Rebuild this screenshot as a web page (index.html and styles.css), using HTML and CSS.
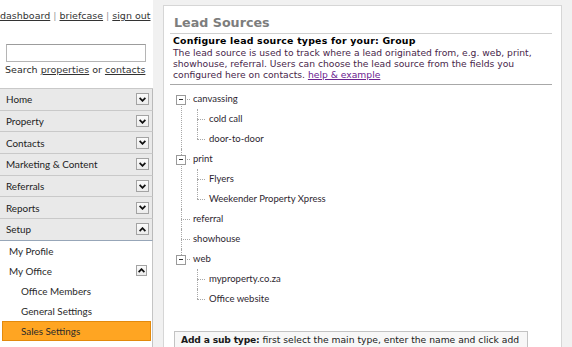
FILE: index.html
```html
<!DOCTYPE html>
<html lang="en">
<head>
    <meta charset="UTF-8">
    <title>Lead Sources</title>
    <link rel="stylesheet" href="styles.css">
</head>
<body>
    <div class="page">
        <aside class="sidebar">
            <div class="top-links">
                <a href="#">dashboard</a><span class="sep">|</span><a href="#">briefcase</a><span class="sep">|</span><a href="#">sign out</a>
            </div>

            <div class="search">
                <input class="search-input" type="text">
                <div class="search-hint">Search <a href="#">properties</a> or <a href="#">contacts</a></div>
            </div>

            <ul class="menu">
                <li class="menu-item"><span>Home</span><span class="chev"><svg width="7" height="5" viewBox="0 0 7 5"><path d="M0.6 0.8 L3.5 3.8 L6.4 0.8" /></svg></span></li>
                <li class="menu-item"><span>Property</span><span class="chev"><svg width="7" height="5" viewBox="0 0 7 5"><path d="M0.6 0.8 L3.5 3.8 L6.4 0.8" /></svg></span></li>
                <li class="menu-item"><span>Contacts</span><span class="chev"><svg width="7" height="5" viewBox="0 0 7 5"><path d="M0.6 0.8 L3.5 3.8 L6.4 0.8" /></svg></span></li>
                <li class="menu-item"><span>Marketing &amp; Content</span><span class="chev"><svg width="7" height="5" viewBox="0 0 7 5"><path d="M0.6 0.8 L3.5 3.8 L6.4 0.8" /></svg></span></li>
                <li class="menu-item"><span>Referrals</span><span class="chev"><svg width="7" height="5" viewBox="0 0 7 5"><path d="M0.6 0.8 L3.5 3.8 L6.4 0.8" /></svg></span></li>
                <li class="menu-item"><span>Reports</span><span class="chev"><svg width="7" height="5" viewBox="0 0 7 5"><path d="M0.6 0.8 L3.5 3.8 L6.4 0.8" /></svg></span></li>
                <li class="menu-item open"><span>Setup</span><span class="chev"><svg width="7" height="5" viewBox="0 0 7 5"><path d="M0.6 4.2 L3.5 1.2 L6.4 4.2" /></svg></span></li>
            </ul>

            <ul class="submenu">
                <li class="sub-item">My Profile</li>
                <li class="sub-item">My Office<span class="chev small"><svg width="7" height="5" viewBox="0 0 7 5"><path d="M0.6 4.2 L3.5 1.2 L6.4 4.2" /></svg></span></li>
                <li class="sub-item level2">Office Members</li>
                <li class="sub-item level2">General Settings</li>
                <li class="sub-item level2 active">Sales Settings</li>
            </ul>
        </aside>

        <main class="panel">
            <div class="panel-head">
                <h1 class="panel-title">Lead Sources</h1>
                <div class="intro">
                    <h2 class="intro-title">Configure lead source types for your: Group</h2>
                    <p class="intro-text">The lead source is used to track where a lead originated from, e.g. web, print, showhouse, referral. Users can choose the lead source from the fields you configured here on contacts. <a href="#">help &amp; example</a></p>
                </div>
            </div>

            <ul class="tree">
                <li>
                    <span class="toggle"></span><span class="label">canvassing</span>
                    <ul>
                        <li><span class="label">cold call</span></li>
                        <li><span class="label">door-to-door</span></li>
                    </ul>
                </li>
                <li>
                    <span class="toggle"></span><span class="label">print</span>
                    <ul>
                        <li><span class="label">Flyers</span></li>
                        <li><span class="label">Weekender Property Xpress</span></li>
                    </ul>
                </li>
                <li><span class="label">referral</span></li>
                <li><span class="label">showhouse</span></li>
                <li>
                    <span class="toggle"></span><span class="label">web</span>
                    <ul>
                        <li><span class="label">myproperty.co.za</span></li>
                        <li><span class="label">Office website</span></li>
                    </ul>
                </li>
            </ul>

            <div class="hint-box">
                <b>Add a sub type:</b> first select the main type, enter the name and click add a new sub type to add it underneath the selected main type.
            </div>
        </main>
    </div>
</body>
</html>
```

FILE: styles.css
```css
:root {
    --verdana: "DejaVu Sans", Verdana, sans-serif;
    --segoe: Lato, "Segoe UI", sans-serif;
    --page-bg: #f1f1f1;
    --row-bg: #e9e9e9;
    --row-line: #c9c9c9;
    --text: #2b2b2b;
}

* {
    margin: 0;
    padding: 0;
    box-sizing: border-box;
}

body {
    background: var(--page-bg);
    height: 347px;
    overflow: hidden;
    font-family: var(--verdana);
    color: var(--text);
}

.page {
    display: flex;
    align-items: flex-start;
    height: 100%;
}

/* ---------- sidebar ---------- */

.sidebar {
    width: 153px;
    height: 100%;
    background: #ffffff;
    flex-shrink: 0;
}

.top-links {
    height: 32px;
    padding-top: 10px;
    font-size: 9.5px;
    line-height: 12px;
    white-space: nowrap;
}

.top-links a {
    color: #333333;
}

.top-links .sep {
    color: #9a9a9a;
    margin: 0 3px;
}

.search {
    padding: 12px 0 0 5px;
}

.search-input {
    display: block;
    width: 140px;
    height: 18px;
    margin-left: 1px;
    border: 1px solid #b5b5b5;
    border-top-color: #9c9c9c;
    background: #ffffff;
}

.search-hint {
    font-size: 9.5px;
    line-height: 14px;
    margin-top: 1px;
    white-space: nowrap;
}

.search-hint a {
    color: #333333;
}

.menu {
    list-style: none;
    margin-top: 11px;
    border-top: 1px solid var(--row-line);
}

.menu-item {
    display: flex;
    align-items: center;
    justify-content: space-between;
    height: 21.7px;
    padding: 0 3px 0 6px;
    background: var(--row-bg);
    border-bottom: 1px solid var(--row-line);
    border-right: 1px solid #b9b9b9;
    font-family: var(--segoe);
    font-size: 9.9px;
    color: #222222;
}

.menu-item.open {
    border-bottom-color: #97a6b8;
}

.chev {
    display: flex;
    align-items: center;
    justify-content: center;
    width: 13px;
    height: 12px;
    border: 1px solid #a3a3a3;
    background: linear-gradient(#fbfbfb, #ececec);
}

.chev.small {
    width: 11px;
    height: 11px;
    margin-right: 2px;
}

.chev svg path {
    fill: none;
    stroke: #111111;
    stroke-width: 1.8;
}

.submenu {
    list-style: none;
    border-right: 1px solid #c4c4c4;
    padding-bottom: 20px;
}

.sub-item {
    display: flex;
    align-items: center;
    justify-content: space-between;
    height: 20px;
    padding: 0 3px 0 9px;
    font-family: var(--segoe);
    font-size: 9.9px;
    color: #2a2a2a;
}

.sub-item.level2 {
    padding-left: 21px;
}

.sub-item.active {
    margin: 0 1px 0 2px;
    padding-left: 18px;
    background: #ffa522;
    border: 1px solid #e38a0c;
}

/* ---------- main panel ---------- */

.panel {
    width: 399px;
    height: 400px;
    margin: 5px 0 0 10px;
    padding: 7px 9px 0 6px;
    background: #ffffff;
    border: 1px solid #d6d6d6;
}

.panel-head {
    border-bottom: 1px solid #a8a8a8;
    padding-bottom: 4px;
}

.panel-title {
    height: 21px;
    padding-left: 4px;
    font-size: 12.7px;
    line-height: 20px;
    font-weight: bold;
    color: #7d7d7d;
    border-bottom: 1px solid #cfcfcf;
}

.intro {
    padding: 1px 3px 0;
    font-size: 9.2px;
    line-height: 11.3px;
}

.intro-title {
    font-size: 9.4px;
    line-height: 11.5px;
    letter-spacing: 0.22px;
    font-weight: bold;
    color: #000000;
}

.intro-text {
    color: #48264a;
}

.intro-text a {
    color: #6b2290;
}

/* ---------- tree ---------- */

.tree {
    list-style: none;
    margin: 4px 0 0 6px;
    font-family: var(--segoe);
    font-size: 9.5px;
    color: #2e1f30;
}

.tree ul {
    list-style: none;
}

.tree li {
    position: relative;
    line-height: 20px;
}

.tree > li {
    padding-left: 17px;
}

.tree ul > li {
    padding-left: 16px;
}

.tree li::before {
    content: "";
    position: absolute;
    top: 0;
    bottom: 0;
    border-left: 1px dotted #a8a8a8;
}

.tree li::after {
    content: "";
    position: absolute;
    top: 10px;
    border-top: 1px dotted #a8a8a8;
}

.tree > li::before,
.tree > li::after {
    left: 5px;
}

.tree > li::after {
    width: 9px;
}

.tree ul > li::before,
.tree ul > li::after {
    left: 4px;
}

.tree ul > li::after {
    width: 8px;
}

.tree > li:first-child::before {
    top: 10px;
}

.tree li:last-child::before {
    bottom: auto;
    height: 10px;
}

.tree > li:last-child::before {
    top: 0;
    height: 6px;
}

.toggle {
    position: absolute;
    left: 0;
    top: 6px;
    width: 10px;
    height: 10px;
    background: #ffffff;
    border: 1px solid #9a9a9a;
    z-index: 1;
}

.toggle::before {
    content: "";
    position: absolute;
    left: 2px;
    top: 3px;
    width: 4px;
    border-top: 1px solid #333333;
}

.hint-box {
    margin: 22px 24px 0 4px;
    padding: 2px 6px;
    background: #f7f7f7;
    border: 1px solid #c3c3c3;
    font-size: 9.2px;
    line-height: 12px;
    color: #1a1a1a;
}

.hint-box b {
    letter-spacing: -0.2px;
}
```
